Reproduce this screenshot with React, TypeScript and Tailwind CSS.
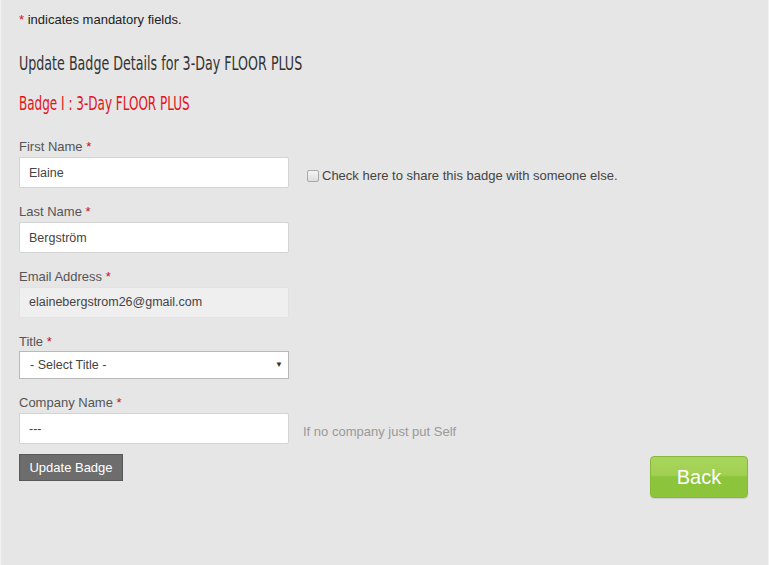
import React from "react";

const Star = () => <span className="text-[#c4121a]"> *</span>;

function Field({ label, children }: { label: string; children: React.ReactNode }) {
  return (
    <div className="mb-[15px] w-[270px]">
      <div className="h-[18px] leading-[18px] mb-[1px] text-[13px] text-[#555]">
        {label}
        <Star />
      </div>
      {children}
    </div>
  );
}

const inputCls =
  "block w-[270px] h-[31px] px-[9px] bg-white border border-[#d4d4d4] rounded-[2px] text-[12.5px] text-[#444] outline-none";

const condensed = { fontFamily: "'DejaVu Sans Condensed', sans-serif" };

export default function App() {
  return (
    <div
      className="w-[769px] h-[565px] bg-[#e6e6e6] border-l border-r border-[#f2f2f2] text-[#333] overflow-hidden"
      style={{ fontFamily: "Arial, 'Liberation Sans', sans-serif" }}
    >
      <div className="pl-[18px] pr-[20px] pt-[11px]">
        <p className="text-[13px] leading-[18px] text-[#222]">
          <span className="text-[#d4121a]">*</span> indicates mandatory fields.
        </p>
        <h2
          className="mt-[22px] text-[19px] leading-[24px] text-[#333] whitespace-nowrap origin-left scale-x-[0.741]"
          style={condensed}
        >
          Update Badge Details for 3-Day FLOOR PLUS
        </h2>
        <h3
          className="mt-[16px] text-[19px] leading-[24px] text-[#e3131b] whitespace-nowrap origin-left scale-x-[0.703]"
          style={condensed}
        >
          Badge I : 3-Day FLOOR PLUS
        </h3>

        <div className="mt-[23px] flex">
          <div>
            <Field label="First Name">
              <input className={inputCls} defaultValue="Elaine" />
            </Field>
          </div>
          <label className="ml-[18px] mt-[31px] flex items-center h-[14px] text-[13px] text-[#444]">
            <span className="inline-block w-[12px] h-[12px] border border-[#a9a9a9] rounded-[2px] bg-gradient-to-b from-[#f4f4f4] to-[#dedede] mr-[3px]" />
            Check here to share this badge with someone else.
          </label>
        </div>

        <Field label="Last Name">
          <input className={inputCls} defaultValue="Bergström" />
        </Field>

        <Field label="Email Address">
          <div className="w-[270px] h-[31px] px-[9px] flex items-center bg-[#efefef] border border-[#e2e2e2] rounded-[2px] text-[12.5px] text-[#444]">
            elainebergstrom26@gmail.com
          </div>
        </Field>

        <div className="mb-[15px] w-[270px]">
          <div className="h-[18px] leading-[18px] text-[13px] text-[#555]">
            Title
            <Star />
          </div>
          <div className="relative w-[270px] h-[28px] bg-white border border-[#b9b9b9] flex items-center pl-[10px] text-[12.5px] text-[#444]">
            - Select Title -
            <span className="absolute right-[5px] top-[8px] text-[8px] leading-[10px] text-[#333]">▼</span>
          </div>
        </div>

        <div className="flex items-start">
          <Field label="Company Name">
            <input className={inputCls} defaultValue="---" />
          </Field>
          <span className="ml-[14px] mt-[28px] text-[13px] text-[#999]">If no company just put Self</span>
        </div>

        <div className="flex items-start justify-between -mt-[5px]">
          <button className="w-[104px] h-[27px] bg-[#6d6d6d] border border-[#585858] text-white text-[13px]">
            Update Badge
          </button>
          <button className="mt-[2px] w-[98px] h-[42px] rounded-[4px] border border-[#86b83a] text-white text-[20px] shadow-[0_1px_1px_rgba(0,0,0,0.1)] bg-[linear-gradient(to_bottom,#a9d55c_0%,#a1d052_45%,#8cc43b_50%,#8cc43b_100%)]">
            Back
          </button>
        </div>
      </div>
    </div>
  );
}
